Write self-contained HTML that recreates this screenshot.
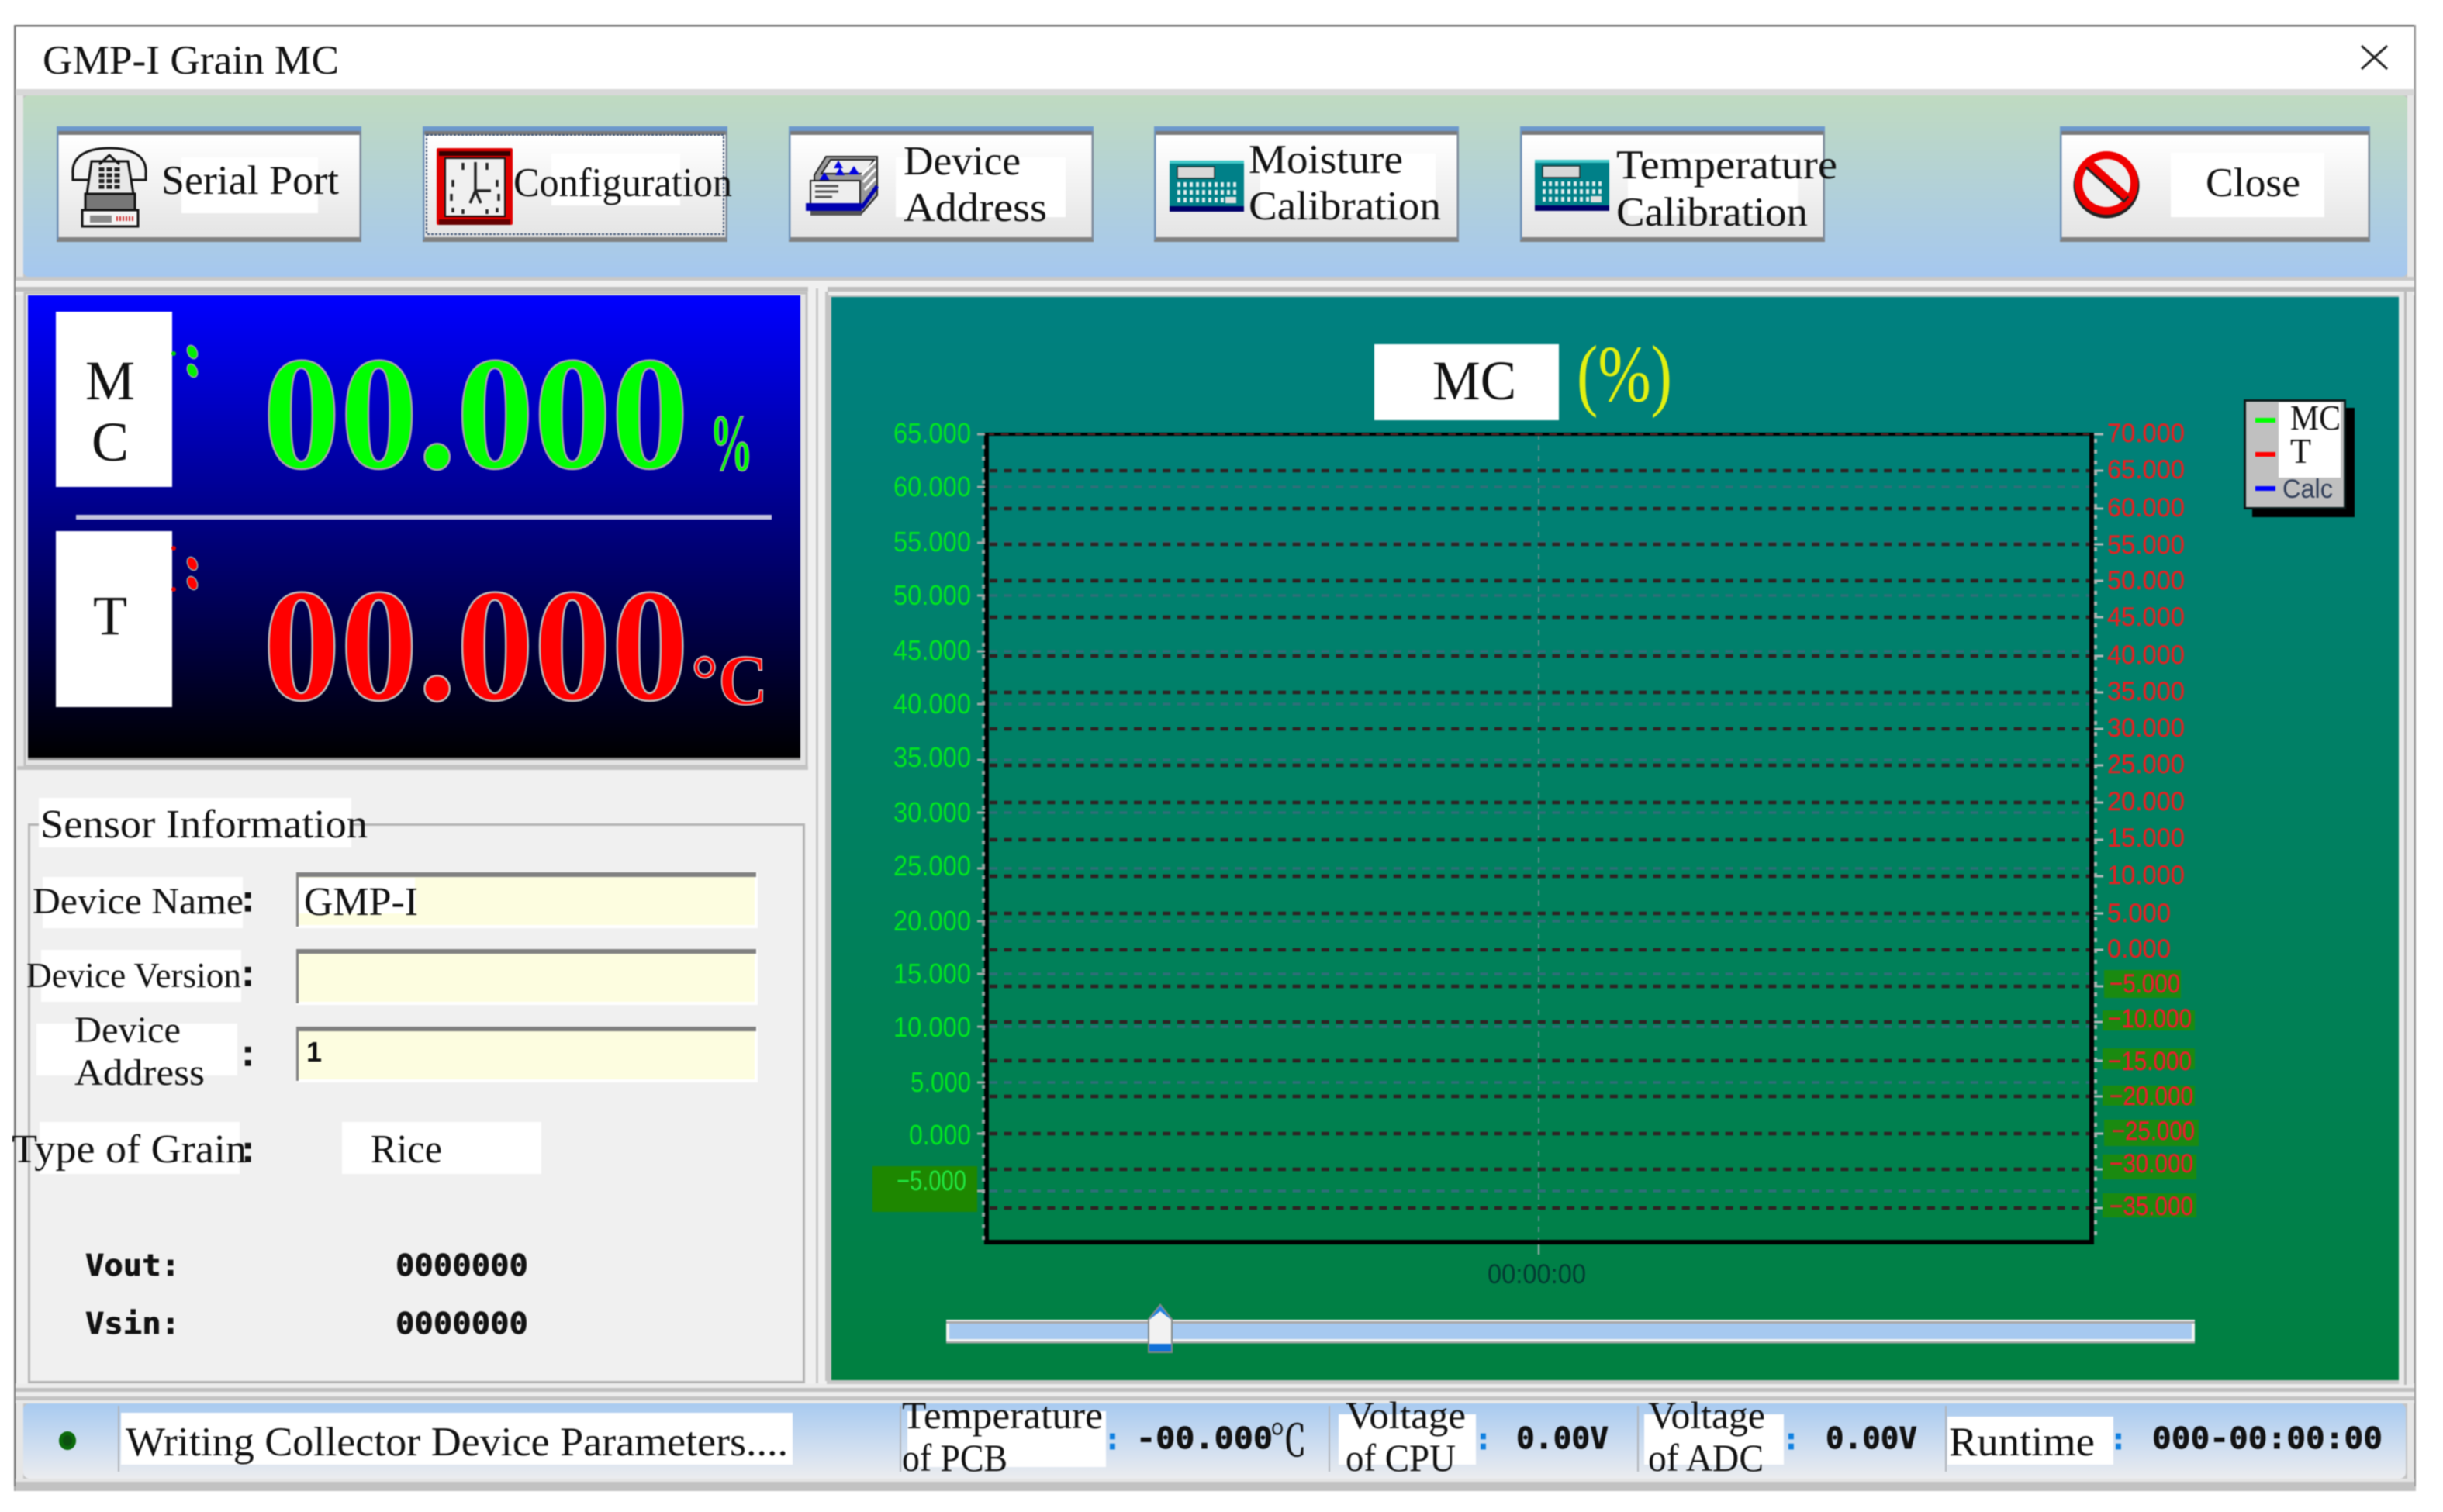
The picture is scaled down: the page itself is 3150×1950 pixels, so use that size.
<!DOCTYPE html>
<html><head><meta charset="utf-8"><title>GMP-I Grain MC</title>
<style>
html,body{margin:0;padding:0;background:#fff;width:3150px;height:1950px;overflow:hidden}
svg{display:block;filter:blur(.7px)}
text{font-family:"Liberation Serif","DejaVu Serif",serif;fill:#111}
.s{font-family:"Liberation Sans",sans-serif}
.m{font-family:"DejaVu Sans Mono","Liberation Mono",monospace;font-weight:bold;fill:#111;stroke:#111;stroke-width:.7}
.g{font-family:"Liberation Sans",sans-serif;fill:#00e820;font-size:36px}
.r{font-family:"Liberation Sans",sans-serif;fill:#e42020;font-size:34px;stroke:#d03030;stroke-width:.4}
</style></head><body>
<svg xmlns="http://www.w3.org/2000/svg" width="3150" height="1950" viewBox="0 0 3150 1950">
<defs>
<linearGradient id="tb" x1="0" y1="0" x2="0" y2="1"><stop offset="0" stop-color="#bfdac0"/><stop offset="1" stop-color="#a5c7ef"/></linearGradient>
<linearGradient id="sb" x1="0" y1="0" x2="0" y2="1"><stop offset="0" stop-color="#a8caf0"/><stop offset="1" stop-color="#ebecef"/></linearGradient>
<linearGradient id="btn" x1="0" y1="0" x2="0" y2="1"><stop offset="0" stop-color="#ffffff"/><stop offset="1" stop-color="#e4e4e4"/></linearGradient>
<linearGradient id="disp" x1="0" y1="0" x2="0" y2="1"><stop offset="0" stop-color="#0000ff"/><stop offset="1" stop-color="#000000"/></linearGradient>
<linearGradient id="chart" x1="0" y1="0" x2="0" y2="1"><stop offset="0" stop-color="#008080"/><stop offset="1" stop-color="#008040"/></linearGradient>
<g id="calc">
<rect x="0" y="0" width="96" height="66" rx="4" fill="#008088"/>
<rect x="0" y="0" width="96" height="4" fill="#40c8c8"/>
<rect x="10" y="8" width="48" height="15" fill="#d8d8d8" stroke="#203030" stroke-width="1.5"/>
<path d="M10 31H86M10 41H86M10 51H70" stroke="#e0eeee" stroke-width="6" stroke-dasharray="4 4"/>
<rect x="72" y="47" width="14" height="8" fill="#e0e0e0"/>
<rect x="0" y="59" width="96" height="7" fill="#000068"/>
</g>
<g id="btnf">
<rect x="0" y="-2" width="393" height="6" fill="#6c98cc"/>
<rect x="0" y="4" width="393" height="5" fill="#7a7a7a"/>
<rect x="0" y="9" width="393" height="132" fill="url(#btn)"/>
<rect x="0" y="141" width="393" height="6" fill="#808080"/>
<rect x="0" y="4" width="2.5" height="140" fill="#6d8fb5"/>
<rect x="390.5" y="4" width="2.5" height="140" fill="#7d8a9a"/>
</g>
</defs>

<!-- window -->
<rect width="3150" height="1950" fill="#fff"/>
<rect x="18" y="32" width="3097" height="1891" fill="#c4c4c4"/>
<rect x="20" y="34" width="3093" height="81" fill="#fff"/>
<rect x="20" y="115" width="10" height="1795" fill="#e6e6e6"/>
<rect x="3104" y="115" width="9" height="1795" fill="#e6e6e6"/>
<rect x="18" y="32" width="3097" height="2.5" fill="#6a6a6a"/>
<rect x="18" y="32" width="2.5" height="1885" fill="#777"/>
<rect x="3112.5" y="32" width="2.5" height="1885" fill="#999"/>
<rect x="18" y="1917" width="200" height="6" fill="#a5a5a5"/>
<text x="55" y="95" font-size="53" textLength="382" lengthAdjust="spacingAndGlyphs">GMP-I Grain MC</text>
<path d="M3045 59L3078 89M3078 59L3045 89" stroke="#222" stroke-width="3" fill="none"/>

<!-- bevel bg -->
<rect x="20" y="115" width="3093" height="8" fill="#d8d8d8"/>
<rect x="20" y="357" width="3093" height="5" fill="#c8c8c8"/>
<rect x="20" y="362" width="3093" height="8" fill="#f0f0f0"/>
<rect x="20" y="370" width="3093" height="6" fill="#bebebe"/>
<rect x="20" y="376" width="3093" height="5" fill="#ececec"/>

<!-- toolbar -->
<rect x="30" y="123" width="3074" height="234" rx="7" fill="url(#tb)"/>
<use href="#btnf" x="73" y="165"/>
<use href="#btnf" x="545" y="165"/>
<use href="#btnf" x="1017" y="165"/>
<use href="#btnf" x="1488" y="165"/>
<use href="#btnf" x="1960" y="165"/>
<g transform="translate(2656 165)"><rect x="0" y="-2" width="400" height="6" fill="#6c98cc"/><rect x="0" y="4" width="400" height="5" fill="#7a7a7a"/><rect x="0" y="9" width="400" height="132" fill="url(#btn)"/><rect x="0" y="141" width="400" height="6" fill="#808080"/><rect x="0" y="4" width="2.5" height="140" fill="#6d8fb5"/><rect x="397.5" y="4" width="2.5" height="140" fill="#7d8a9a"/></g>
<rect x="550" y="174" width="383" height="128" fill="none" stroke="#3a4f70" stroke-width="2" stroke-dasharray="3 2"/>

<rect x="234" y="203" width="176" height="72" fill="#fff"/>
<rect x="711" y="198" width="166" height="67" fill="#fff"/>
<rect x="1155" y="203" width="219" height="77" fill="#fff"/>
<rect x="1625" y="198" width="226" height="80" fill="#fff"/>
<rect x="2099" y="198" width="219" height="80" fill="#fff"/>
<rect x="2799" y="197" width="198" height="83" fill="#fff"/>

<text x="208" y="250" font-size="53" textLength="229" lengthAdjust="spacingAndGlyphs">Serial Port</text>
<text x="662" y="253" font-size="53" textLength="282" lengthAdjust="spacingAndGlyphs">Configuration</text>
<text x="1165" y="225" font-size="53" textLength="151" lengthAdjust="spacingAndGlyphs">Device</text>
<text x="1165" y="285" font-size="53" textLength="185" lengthAdjust="spacingAndGlyphs">Address</text>
<text x="1610" y="223" font-size="53" textLength="199" lengthAdjust="spacingAndGlyphs">Moisture</text>
<text x="1610" y="283" font-size="53" textLength="248" lengthAdjust="spacingAndGlyphs">Calibration</text>
<text x="2084" y="230" font-size="53" textLength="285" lengthAdjust="spacingAndGlyphs">Temperature</text>
<text x="2084" y="291" font-size="53" textLength="247" lengthAdjust="spacingAndGlyphs">Calibration</text>
<text x="2844" y="253" font-size="53" textLength="122" lengthAdjust="spacingAndGlyphs">Close</text>

<!-- phone icon -->
<g stroke="#111" stroke-width="3">
<path d="M94 224C92 198 118 191 141 191C165 191 190 198 188 224L188 232L168 232L165 212L118 212L115 232L94 232Z" fill="#f4f4f4"/>
<path d="M118 208H165L172 250H112Z" fill="#e8e8e8"/>
<path d="M128 212L141 200L154 212" fill="none"/>
<path d="M110 250H174V271H110Z" fill="#777"/>
<rect x="106" y="271" width="72" height="21" fill="#f4f4f4"/>
</g>
<path d="M131 216V246M141 216V246M151 216V246" stroke="#222" stroke-width="7" stroke-dasharray="5 2.5"/>
<rect x="116" y="278" width="28" height="9" fill="#8a8a8a"/>
<path d="M150 282H172" stroke="#d03030" stroke-width="6" stroke-dasharray="2 2"/>

<!-- clock icon -->
<g transform="translate(1 0)">
<rect x="562" y="191" width="98" height="99" rx="2" fill="#e00000"/>
<rect x="565" y="195" width="92" height="6" fill="#300"/>
<rect x="573" y="204" width="77" height="75" fill="#f0f0f0" stroke="#111" stroke-width="2"/>
<rect x="565" y="283" width="92" height="7" fill="#600"/>
<g stroke="#222" stroke-width="3.5" fill="none">
<path d="M596 210V219M612 209V218M627 210V219M583 232V241M640 232V241M581 250V259M642 250V259M583 268V274M596 270V276M627 270V276M640 268V274"/>
<path d="M612 218V246L632 246M612 246L605 262M612 246L619 262"/>
</g>
</g>

<!-- stack icon -->
<g transform="translate(3 0)">
<path d="M1047 226L1062 202H1128V252L1108 275H1047Z" fill="#9a9a9a" stroke="#222" stroke-width="2"/>
<path d="M1056 224L1068 206H1124L1112 224Z" fill="#ececec" stroke="#222" stroke-width="2"/>
<path d="M1108 226L1126 208M1110 235L1126 218M1112 245L1126 230" stroke="#fff" stroke-width="3"/>
<path d="M1108 268L1128 240" stroke="#0000b0" stroke-width="5"/>
<path d="M1078 207l6 10h-12zM1098 214l7 11h-14zM1060 222l7 11h-14zM1080 216l6 10h-12z" fill="#0000e0"/>
<rect x="1042" y="233" width="64" height="30" fill="#eeeeee" stroke="#222" stroke-width="2"/>
<path d="M1048 240H1078M1048 247H1078M1048 254H1070" stroke="#555" stroke-width="3"/>
<rect x="1036" y="262" width="72" height="10" fill="#0000b0"/>
<rect x="1042" y="272" width="66" height="6" fill="#555"/>
</g>

<use href="#calc" x="1508" y="207"/>
<use href="#calc" x="1979" y="206"/>

<!-- no icon -->
<circle cx="2716" cy="239" r="38" fill="none" stroke="#222" stroke-width="9"/>
<circle cx="2716" cy="236" r="36" fill="#eee" stroke="#f00000" stroke-width="10"/>
<path d="M2692 213L2742 258" stroke="#222" stroke-width="10"/>
<path d="M2692 209L2742 254" stroke="#f00000" stroke-width="10"/>

<!-- left display -->
<rect x="30" y="376" width="1012" height="616" fill="#e4e4e4"/>
<rect x="32" y="378" width="1008" height="610" fill="none" stroke="#c0c0c0" stroke-width="3"/>
<rect x="36" y="381" width="996" height="596" fill="url(#disp)"/>
<rect x="36" y="977" width="996" height="3" fill="#8a8a8a"/>
<rect x="72" y="402" width="150" height="226" fill="#fff"/>
<rect x="72" y="685" width="150" height="227" fill="#fff"/>
<text x="142" y="515" font-size="72" text-anchor="middle">M</text>
<text x="142" y="594" font-size="72" text-anchor="middle">C</text>
<text x="142" y="818" font-size="72" text-anchor="middle">T</text>
<g stroke="#9aa" stroke-width="1.5">
<ellipse cx="248" cy="454" rx="6" ry="9" fill="#00f000" transform="rotate(-25 248 454)"/>
<ellipse cx="248" cy="478" rx="6" ry="9" fill="#00f000" transform="rotate(-25 248 478)"/>
<ellipse cx="248" cy="727" rx="6" ry="9" fill="#ff0000" transform="rotate(-25 248 727)"/>
<ellipse cx="248" cy="752" rx="6" ry="9" fill="#ff0000" transform="rotate(-25 248 752)"/>
</g>
<circle cx="224" cy="456" r="3" fill="#00d000"/>
<circle cx="224" cy="707" r="3" fill="#e00000"/><circle cx="224" cy="760" r="3" fill="#e00000"/>
<rect x="98" y="664" width="897" height="6" fill="#c4c4de"/>
<text x="339" y="603" font-size="208" font-weight="bold" style="fill:#00ff00;stroke:#a8a8a8;stroke-width:2.5" textLength="549" lengthAdjust="spacingAndGlyphs">00.000</text>
<text x="339" y="902" font-size="208" font-weight="bold" style="fill:#ff0000;stroke:#c0c0c0;stroke-width:2.5" textLength="549" lengthAdjust="spacingAndGlyphs">00.000</text>
<text x="915" y="606" font-size="104" font-weight="bold" style="fill:#00ff00;stroke:#a8a8a8;stroke-width:1.5" textLength="56" lengthAdjust="spacingAndGlyphs">%</text>
<text x="891" y="908" font-size="92" font-weight="bold" style="fill:#ff0000;stroke:#d8d8d8;stroke-width:1.5" textLength="99" lengthAdjust="spacingAndGlyphs">°C</text>

<!-- lower left -->
<rect x="22" y="992" width="1020" height="792" fill="#f0f0f0"/>
<rect x="22" y="988" width="1020" height="5" fill="#c4c4c4"/>
<rect x="37.5" y="1063.5" width="999" height="719" fill="none" stroke="#b4b4b4" stroke-width="3"/>
<rect x="50" y="1029" width="403" height="64" fill="#fff"/>
<text x="52" y="1080" font-size="52" textLength="422" lengthAdjust="spacingAndGlyphs">Sensor Information</text>
<rect x="55" y="1131" width="258" height="66" fill="#fff"/>
<text x="42" y="1178" font-size="48" textLength="272" lengthAdjust="spacingAndGlyphs">Device Name</text>
<rect x="53" y="1225" width="258" height="67" fill="#fff"/>
<text x="34" y="1273" font-size="46" textLength="277" lengthAdjust="spacingAndGlyphs">Device Version</text>
<rect x="47" y="1320" width="259" height="67" fill="#fff"/>
<text x="96" y="1344" font-size="48" textLength="137" lengthAdjust="spacingAndGlyphs">Device</text>
<text x="96" y="1399" font-size="48" textLength="168" lengthAdjust="spacingAndGlyphs">Address</text>
<rect x="51" y="1447" width="258" height="67" fill="#fff"/>
<text x="15" y="1499" font-size="52" textLength="303" lengthAdjust="spacingAndGlyphs">Type of Grain</text>
<rect x="441" y="1447" width="257" height="67" fill="#fff"/>
<text x="478" y="1499" font-size="52" textLength="92" lengthAdjust="spacingAndGlyphs">Rice</text>
<g>
<text class="s" x="312" y="1175" font-size="46" font-weight="bold" style="stroke:#111;stroke-width:1.2">:</text>
<text class="s" x="312" y="1271" font-size="46" font-weight="bold" style="stroke:#111;stroke-width:1.2">:</text>
<text class="s" x="312" y="1374" font-size="46" font-weight="bold" style="stroke:#111;stroke-width:1.2">:</text>
<text class="s" x="312" y="1498" font-size="46" font-weight="bold" style="stroke:#111;stroke-width:1.2">:</text>
</g>
<!-- inputs -->
<g>
<rect x="382" y="1125" width="595" height="72" fill="#fff"/>
<rect x="385" y="1131" width="588" height="62" fill="#fdfde0"/>
<rect x="382" y="1125" width="593" height="6" fill="#808080"/>
<rect x="382" y="1125" width="3" height="70" fill="#808080"/>
<rect x="385" y="1132" width="150" height="46" fill="#fff"/>
<rect x="382" y="1224" width="595" height="72" fill="#fff"/>
<rect x="385" y="1230" width="588" height="62" fill="#fdfde0"/>
<rect x="382" y="1224" width="593" height="6" fill="#808080"/>
<rect x="382" y="1224" width="3" height="70" fill="#808080"/>
<rect x="382" y="1324" width="595" height="72" fill="#fff"/>
<rect x="385" y="1330" width="588" height="62" fill="#fdfde0"/>
<rect x="382" y="1324" width="593" height="6" fill="#808080"/>
<rect x="382" y="1324" width="3" height="70" fill="#808080"/>
</g>
<text x="392" y="1180" font-size="52" textLength="147" lengthAdjust="spacingAndGlyphs">GMP-I</text>
<text class="s" x="395" y="1369" font-size="36" font-weight="bold">1</text>
<text class="m" x="110" y="1645" font-size="38" textLength="122" lengthAdjust="spacingAndGlyphs">Vout:</text>
<text class="m" x="110" y="1720" font-size="38" textLength="122" lengthAdjust="spacingAndGlyphs">Vsin:</text>
<text class="m" x="510" y="1645" font-size="38" textLength="171" lengthAdjust="spacingAndGlyphs">0000000</text>
<text class="m" x="510" y="1720" font-size="38" textLength="171" lengthAdjust="spacingAndGlyphs">0000000</text>

<!-- splitter + below panels -->
<rect x="1042" y="370" width="25" height="1420" fill="#f0f0f0"/>
<rect x="1052" y="372" width="3" height="1418" fill="#c8c8c8"/>
<rect x="1064" y="376" width="4" height="1405" fill="#c4c4c4"/>
<rect x="20" y="1784" width="3093" height="6" fill="#ececec"/>
<rect x="20" y="1790" width="3093" height="5" fill="#c0c0c0"/>
<rect x="20" y="1795" width="3093" height="6" fill="#ededed"/>
<rect x="20" y="1801" width="3093" height="5" fill="#c4c4c4"/>
<rect x="20" y="1806" width="3093" height="4" fill="#e8e8e8"/>
<rect x="1066" y="1781" width="2040" height="4" fill="#c8c8c8"/>
<rect x="3093" y="376" width="18" height="1410" fill="#e8e8e8"/>
<rect x="3100" y="376" width="3" height="1410" fill="#b8b8b8"/>

<!-- chart -->
<rect x="1072" y="383" width="2021" height="1397" fill="url(#chart)"/>
<rect x="1772" y="444" width="238" height="98" fill="#fff"/>
<text x="1847" y="515" font-size="72" textLength="108" lengthAdjust="spacingAndGlyphs">MC</text>
<text x="2033" y="517" font-size="104" style="fill:#e2f010" textLength="123" lengthAdjust="spacingAndGlyphs">(%)</text>

<!-- grid -->
<path d="M1984 560V1600" stroke="#5a8a88" stroke-width="2" stroke-dasharray="7 7"/>
<path d="M1984 1602V1618" stroke="#8aa8a0" stroke-width="2.5"/>
<g fill="none" stroke="#2f6f78" stroke-width="3.5" stroke-dasharray="10 8.6">
<path d="M1276 628H2694M1276 700H2694M1276 768H2694M1276 840H2694M1276 908H2694M1276 980H2694M1276 1048H2694M1276 1120H2694M1276 1188H2694M1276 1256H2694M1276 1324H2694M1276 1396H2694M1276 1462H2694M1276 1536H2694"/>
</g>
<g fill="none" stroke="#2e2222" stroke-width="4.5" stroke-dasharray="10 8.6">
<path d="M1276 607H2694M1276 656H2694M1276 702H2694M1276 749H2694M1276 796H2694M1276 846H2694M1276 893H2694M1276 940H2694M1276 987H2694M1276 1035H2694M1276 1083H2694M1276 1130H2694M1276 1178H2694M1276 1225H2694M1276 1272H2694M1276 1318H2694M1276 1368H2694M1276 1414H2694M1276 1462H2694M1276 1508H2694M1276 1558H2694"/>
</g>
<path d="M1272 560H2697" stroke="#000" stroke-width="4"/>
<path d="M1272 560H2697" stroke="#6a3030" stroke-width="1.8" stroke-dasharray="10 8.6"/>
<path d="M1272 558V1604M2697 558V1604" stroke="#000" stroke-width="6"/>
<path d="M1269 1602H2700" stroke="#000" stroke-width="6"/>
<!-- ticks -->
<path d="M1268 574V1600" stroke="#8fa5a0" stroke-width="4" stroke-dasharray="5 10"/>
<path d="M1260 560H1270M1260 628H1270M1260 700H1270M1260 768H1270M1260 840H1270M1260 908H1270M1260 980H1270M1260 1048H1270M1260 1120H1270M1260 1188H1270M1260 1256H1270M1260 1324H1270M1260 1396H1270M1260 1462H1270M1260 1536H1270" stroke="#a0a8a8" stroke-width="3"/>
<path d="M2702 566V1600" stroke="#a5b5b0" stroke-width="4" stroke-dasharray="5 9"/>
<path d="M2700 560H2712M2700 607H2712M2700 656H2712M2700 702H2712M2700 749H2712M2700 796H2712M2700 846H2712M2700 893H2712M2700 940H2712M2700 987H2712M2700 1035H2712M2700 1083H2712M2700 1130H2712M2700 1178H2712M2700 1225H2712M2700 1272H2712M2700 1318H2712M2700 1368H2712M2700 1414H2712M2700 1462H2712M2700 1508H2712M2700 1558H2712" stroke="#b0b8b8" stroke-width="3"/>

<!-- left labels -->
<g text-anchor="end">
<text class="g" x="1252" y="571" textLength="100" lengthAdjust="spacingAndGlyphs">65.000</text>
<text class="g" x="1252" y="640" textLength="100" lengthAdjust="spacingAndGlyphs">60.000</text>
<text class="g" x="1252" y="711" textLength="100" lengthAdjust="spacingAndGlyphs">55.000</text>
<text class="g" x="1252" y="780" textLength="100" lengthAdjust="spacingAndGlyphs">50.000</text>
<text class="g" x="1252" y="851" textLength="100" lengthAdjust="spacingAndGlyphs">45.000</text>
<text class="g" x="1252" y="920" textLength="100" lengthAdjust="spacingAndGlyphs">40.000</text>
<text class="g" x="1252" y="989" textLength="100" lengthAdjust="spacingAndGlyphs">35.000</text>
<text class="g" x="1252" y="1060" textLength="100" lengthAdjust="spacingAndGlyphs">30.000</text>
<text class="g" x="1252" y="1129" textLength="100" lengthAdjust="spacingAndGlyphs">25.000</text>
<text class="g" x="1252" y="1200" textLength="100" lengthAdjust="spacingAndGlyphs">20.000</text>
<text class="g" x="1252" y="1268" textLength="100" lengthAdjust="spacingAndGlyphs">15.000</text>
<text class="g" x="1252" y="1337" textLength="100" lengthAdjust="spacingAndGlyphs">10.000</text>
<text class="g" x="1252" y="1408" textLength="78" lengthAdjust="spacingAndGlyphs">5.000</text>
<text class="g" x="1252" y="1476" textLength="80" lengthAdjust="spacingAndGlyphs">0.000</text>
</g>
<rect x="1125" y="1504" width="135" height="59" fill="#1e8700"/>
<text class="g" x="1156" y="1535" textLength="90" lengthAdjust="spacingAndGlyphs" style="fill:#20e840">−5.000</text>

<!-- right labels -->
<g>
<text class="r" x="2717" y="570" textLength="100" lengthAdjust="spacingAndGlyphs">70.000</text>
<text class="r" x="2717" y="617" textLength="100" lengthAdjust="spacingAndGlyphs">65.000</text>
<text class="r" x="2717" y="666" textLength="100" lengthAdjust="spacingAndGlyphs">60.000</text>
<text class="r" x="2717" y="714" textLength="100" lengthAdjust="spacingAndGlyphs">55.000</text>
<text class="r" x="2717" y="760" textLength="100" lengthAdjust="spacingAndGlyphs">50.000</text>
<text class="r" x="2717" y="807" textLength="100" lengthAdjust="spacingAndGlyphs">45.000</text>
<text class="r" x="2717" y="856" textLength="100" lengthAdjust="spacingAndGlyphs">40.000</text>
<text class="r" x="2717" y="903" textLength="100" lengthAdjust="spacingAndGlyphs">35.000</text>
<text class="r" x="2717" y="950" textLength="100" lengthAdjust="spacingAndGlyphs">30.000</text>
<text class="r" x="2717" y="997" textLength="100" lengthAdjust="spacingAndGlyphs">25.000</text>
<text class="r" x="2717" y="1045" textLength="100" lengthAdjust="spacingAndGlyphs">20.000</text>
<text class="r" x="2717" y="1092" textLength="100" lengthAdjust="spacingAndGlyphs">15.000</text>
<text class="r" x="2717" y="1140" textLength="100" lengthAdjust="spacingAndGlyphs">10.000</text>
<text class="r" x="2717" y="1189" textLength="82" lengthAdjust="spacingAndGlyphs">5.000</text>
<text class="r" x="2717" y="1235" textLength="82" lengthAdjust="spacingAndGlyphs">0.000</text>
</g>
<g fill="#1a8a10">
<rect x="2713" y="1251" width="99" height="36"/>
<rect x="2711" y="1303" width="119" height="26"/>
<rect x="2711" y="1352" width="119" height="27"/>
<rect x="2711" y="1400" width="119" height="26"/>
<rect x="2713" y="1444" width="122" height="34"/>
<rect x="2711" y="1489" width="121" height="32"/>
<rect x="2711" y="1539" width="121" height="31"/>
</g>
<g>
<text class="r" x="2720" y="1280" textLength="91" lengthAdjust="spacingAndGlyphs" style="fill:#ee1c2c">−5.000</text>
<text class="r" x="2718" y="1325" textLength="108" lengthAdjust="spacingAndGlyphs" style="fill:#ee1c2c">−10.000</text>
<text class="r" x="2718" y="1380" textLength="108" lengthAdjust="spacingAndGlyphs" style="fill:#ee1c2c">−15.000</text>
<text class="r" x="2720" y="1425" textLength="108" lengthAdjust="spacingAndGlyphs" style="fill:#ee1c2c">−20.000</text>
<text class="r" x="2723" y="1470" textLength="107" lengthAdjust="spacingAndGlyphs" style="fill:#ee1c2c">−25.000</text>
<text class="r" x="2720" y="1512" textLength="108" lengthAdjust="spacingAndGlyphs" style="fill:#ee1c2c">−30.000</text>
<text class="r" x="2720" y="1567" textLength="108" lengthAdjust="spacingAndGlyphs" style="fill:#ee1c2c">−35.000</text>
</g>
<text class="s" x="1918" y="1655" font-size="35" style="fill:#033a32" textLength="127" lengthAdjust="spacingAndGlyphs">00:00:00</text>

<!-- legend -->
<rect x="2904" y="526" width="132" height="141" fill="#000"/>
<rect x="2894.5" y="516.5" width="129" height="139" fill="#c0c0c0" stroke="#0a1a1a" stroke-width="3"/>
<rect x="2938" y="519" width="80" height="97" fill="#fff"/>
<text x="2953" y="554" font-size="46" textLength="65" lengthAdjust="spacingAndGlyphs">MC</text>
<text x="2953" y="597" font-size="46" textLength="27" lengthAdjust="spacingAndGlyphs">T</text>
<text class="s" x="2943" y="642" font-size="34" style="fill:#33405a" textLength="65" lengthAdjust="spacingAndGlyphs">Calc</text>
<path d="M2908 542H2934" stroke="#00ff00" stroke-width="6"/>
<path d="M2908 586H2934" stroke="#ff0000" stroke-width="6"/>
<path d="M2908 630H2934" stroke="#0000ff" stroke-width="6"/>

<!-- slider -->
<rect x="1220" y="1702" width="1610" height="30" fill="#f2f2f2"/>
<rect x="1220" y="1704" width="1610" height="3" fill="#a8a8a8"/>
<rect x="1220" y="1730" width="1610" height="2.5" fill="#a8a8a8"/>
<rect x="1224" y="1707" width="1602" height="20" fill="#a6c9f0"/>
<path d="M1496 1681L1512 1701V1745H1480V1701Z" fill="#808888"/>
<path d="M1496 1684L1510 1702V1743H1482V1702Z" fill="#f2f2f2"/>
<path d="M1496 1684L1510 1702L1496 1691L1482 1702Z" fill="#2080e0"/>
<rect x="1482" y="1733" width="28" height="10" fill="#1070d8"/>

<!-- status bar -->
<rect x="30" y="1810" width="3072" height="97" rx="8" fill="url(#sb)"/>
<rect x="20" y="1907" width="3093" height="4" fill="#e4e4e4"/>
<rect x="20" y="1911" width="3093" height="12" fill="#c2c2c2"/>
<ellipse cx="87" cy="1858" rx="11" ry="12" fill="#0a6a0a"/><ellipse cx="87" cy="1858" rx="6" ry="7" fill="#0c5010"/>
<path d="M153 1813V1898M1161 1813V1898M1714 1813V1898M2112 1813V1898M2509 1813V1898" stroke="#b0b4ba" stroke-width="2"/>
<rect x="156" y="1822" width="866" height="67" fill="#fff"/>
<text x="162" y="1877" font-size="53" textLength="854" lengthAdjust="spacingAndGlyphs">Writing Collector Device Parameters....</text>
<rect x="1170" y="1820" width="256" height="72" fill="#fff"/>
<text x="1163" y="1842" font-size="50" textLength="259" lengthAdjust="spacingAndGlyphs">Temperature</text>
<text x="1163" y="1897" font-size="50" textLength="136" lengthAdjust="spacingAndGlyphs">of PCB</text>
<rect x="1726" y="1824" width="177" height="65" fill="#fff"/>
<text x="1735" y="1842" font-size="50" textLength="155" lengthAdjust="spacingAndGlyphs">Voltage</text>
<text x="1735" y="1897" font-size="50" textLength="142" lengthAdjust="spacingAndGlyphs">of CPU</text>
<rect x="2120" y="1824" width="180" height="65" fill="#fff"/>
<text x="2125" y="1842" font-size="50" textLength="151" lengthAdjust="spacingAndGlyphs">Voltage</text>
<text x="2125" y="1897" font-size="50" textLength="149" lengthAdjust="spacingAndGlyphs">of ADC</text>
<rect x="2511" y="1827" width="214" height="62" fill="#fff"/>
<text x="2513" y="1877" font-size="53" textLength="188" lengthAdjust="spacingAndGlyphs">Runtime</text>
<g font-size="38">
<text class="m" x="1423" y="1869" style="fill:#1080e0;stroke:#1080e0">:</text>
<text class="m" x="1901" y="1869" style="fill:#1080e0;stroke:#1080e0">:</text>
<text class="m" x="2298" y="1869" style="fill:#1080e0;stroke:#1080e0">:</text>
<text class="m" x="2720" y="1869" style="fill:#1080e0;stroke:#1080e0">:</text>
<text class="m" x="1465" y="1868" textLength="176" lengthAdjust="spacingAndGlyphs">-00.000</text>
<text class="m" x="1955" y="1868" textLength="119" lengthAdjust="spacingAndGlyphs">0.00V</text>
<text class="m" x="2354" y="1868" textLength="118" lengthAdjust="spacingAndGlyphs">0.00V</text>
<text class="m" x="2775" y="1868" textLength="297" lengthAdjust="spacingAndGlyphs">000-00:00:00</text>
</g>
<text x="1637" y="1878" font-size="56" textLength="48" lengthAdjust="spacingAndGlyphs" style="font-family:'Liberation Serif','Noto Serif CJK SC',serif;stroke:#111;stroke-width:.5">℃</text>
</svg>
</body></html>
